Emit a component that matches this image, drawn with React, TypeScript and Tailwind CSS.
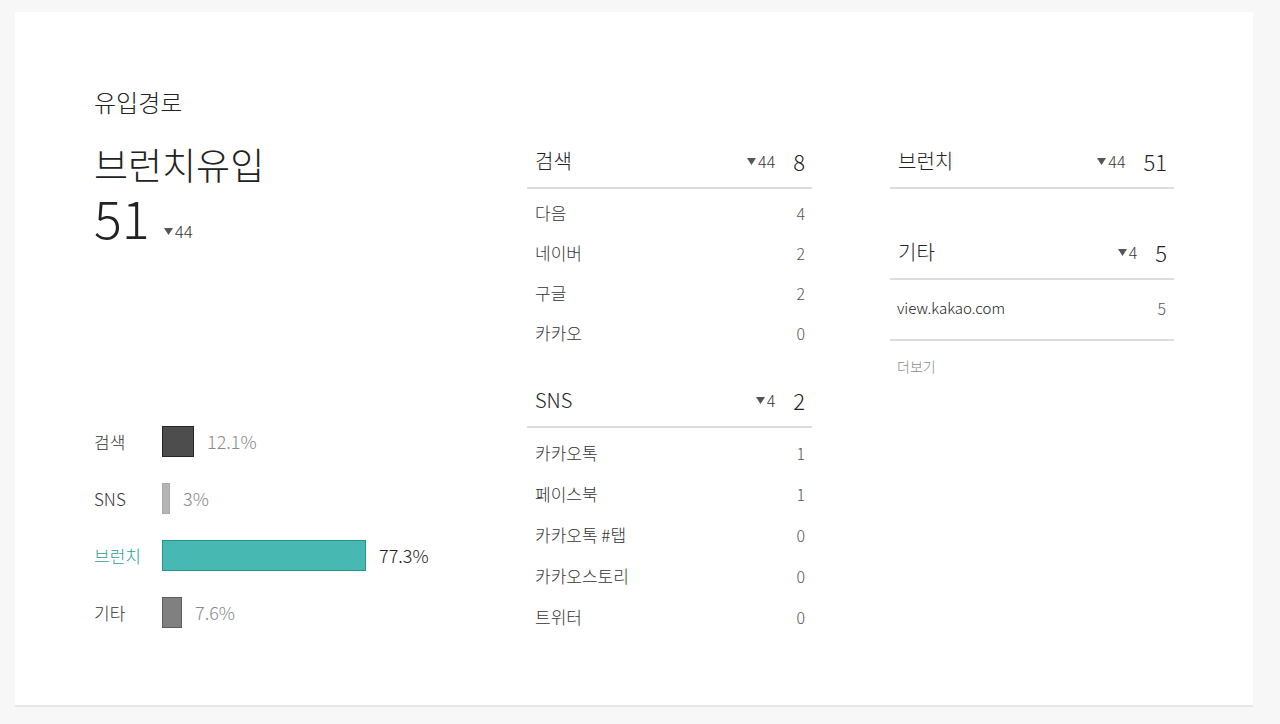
import React from "react";

const FONT = { fontFamily: '"Noto Sans CJK KR", "Noto Sans", sans-serif' };

function Tri() {
  return (
    <svg width="9" height="7" viewBox="0 0 9 7" className="inline-block mr-[2px]">
      <path d="M0 0 H9 L4.5 7 Z" fill="#555" />
    </svg>
  );
}

function Header({ title, diff, total }: { title: string; diff: string; total: string }) {
  return (
    <div className="flex items-center h-[54px] border-b-2 border-[#dcdcdc] pl-[8px] pr-[7px]">
      <span className="text-[20px] font-light text-[#222] flex-1">{title}</span>
      <span className="flex items-center text-[16px] font-light text-[#333]">
        <Tri />
        {diff}
      </span>
      <span className="ml-[18px] text-[22px] font-light text-[#222]">{total}</span>
    </div>
  );
}

function Row({ name, value, h }: { name: string; value: string; h: string }) {
  return (
    <div className={`flex items-center pl-[8px] pr-[7px] ${h}`}>
      <span className="flex-1 text-[17px] font-light text-[#333]">{name}</span>
      <span className="text-[16px] font-light text-[#555]">{value}</span>
    </div>
  );
}

const bars = [
  { label: "검색", pct: 12.1, bg: "bg-[#4d4d4d]", border: "border-[#262626]", text: "text-[#888]", labelColor: "text-[#333]" },
  { label: "SNS", pct: 3, bg: "bg-[#b5b5b5]", border: "border-[#a8a8a8]", text: "text-[#888]", labelColor: "text-[#333]" },
  { label: "브런치", pct: 77.3, bg: "bg-[#48b8b2]", border: "border-[#23958f]", text: "text-[#222]", labelColor: "text-[#2e9e98]" },
  { label: "기타", pct: 7.6, bg: "bg-[#808080]", border: "border-[#5c5c5c]", text: "text-[#888]", labelColor: "text-[#333]" },
];

export default function App() {
  return (
    <div className="w-[1280px] h-[724px] bg-[#f7f7f7] pt-[12px] pl-[15px]" style={FONT}>
      <div className="w-[1238px] h-[695px] bg-white border-b-2 border-[#e6e6e6] flex pl-[79px] pt-[75px]">
        {/* Left column */}
        <div className="w-[433px] flex flex-col">
          <div className="text-[24px] leading-[30px] font-light text-[#222]">유입경로</div>
          <div className="mt-[24px] text-[37px] leading-[46px] font-light text-[#222]">브런치유입</div>
          <div className="mt-[4px] flex items-center h-[52px]">
            <span className="text-[52px] leading-[52px] font-light text-[#222]">51</span>
            <span className="ml-[14px] mt-[28px] flex items-center text-[17px] font-light text-[#333]">
              <Tri />
              44
            </span>
          </div>
          <div className="mt-[170px] flex flex-col">
            {bars.map((b) => (
              <div key={b.label} className="flex items-center h-[57px]">
                <span className={`w-[68px] text-[17px] font-light ${b.labelColor}`}>{b.label}</span>
                <div
                  className={`h-[31px] border ${b.bg} ${b.border}`}
                  style={{ width: `${Math.round(b.pct * 2.64)}px` }}
                />
                <span className={`ml-[13px] text-[18px] font-light ${b.text}`}>{b.pct}%</span>
              </div>
            ))}
          </div>
        </div>

        {/* Middle column */}
        <div className="w-[285px] mt-[48px]">
          <Header title="검색" diff="44" total="8" />
          <div className="pt-[4px]">
            <Row name="다음" value="4" h="h-[40px]" />
            <Row name="네이버" value="2" h="h-[40px]" />
            <Row name="구글" value="2" h="h-[40px]" />
            <Row name="카카오" value="0" h="h-[40px]" />
          </div>
          <div className="mt-[21px]">
            <Header title="SNS" diff="4" total="2" />
          </div>
          <div className="pt-[4px]">
            <Row name="카카오톡" value="1" h="h-[41px]" />
            <Row name="페이스북" value="1" h="h-[41px]" />
            <Row name="카카오톡 #탭" value="0" h="h-[41px]" />
            <Row name="카카오스토리" value="0" h="h-[41px]" />
            <Row name="트위터" value="0" h="h-[41px]" />
          </div>
        </div>

        {/* Right column */}
        <div className="w-[284px] ml-[78px] mt-[48px]">
          <Header title="브런치" diff="44" total="51" />
          <div className="mt-[37px]">
            <Header title="기타" diff="4" total="5" />
          </div>
          <div className="flex items-center pl-[7px] pr-[8px] pt-[16px] pb-[19px] border-b-2 border-[#dcdcdc]">
            <span className="flex-1 text-[15px] leading-[24px] font-light text-[#222]">view.kakao.com</span>
            <span className="text-[16px] leading-[24px] font-light text-[#555]">5</span>
          </div>
          <div className="mt-[15px] pl-[7px] text-[14px] leading-[20px] font-light text-[#888]">더보기</div>
        </div>
      </div>
    </div>
  );
}
